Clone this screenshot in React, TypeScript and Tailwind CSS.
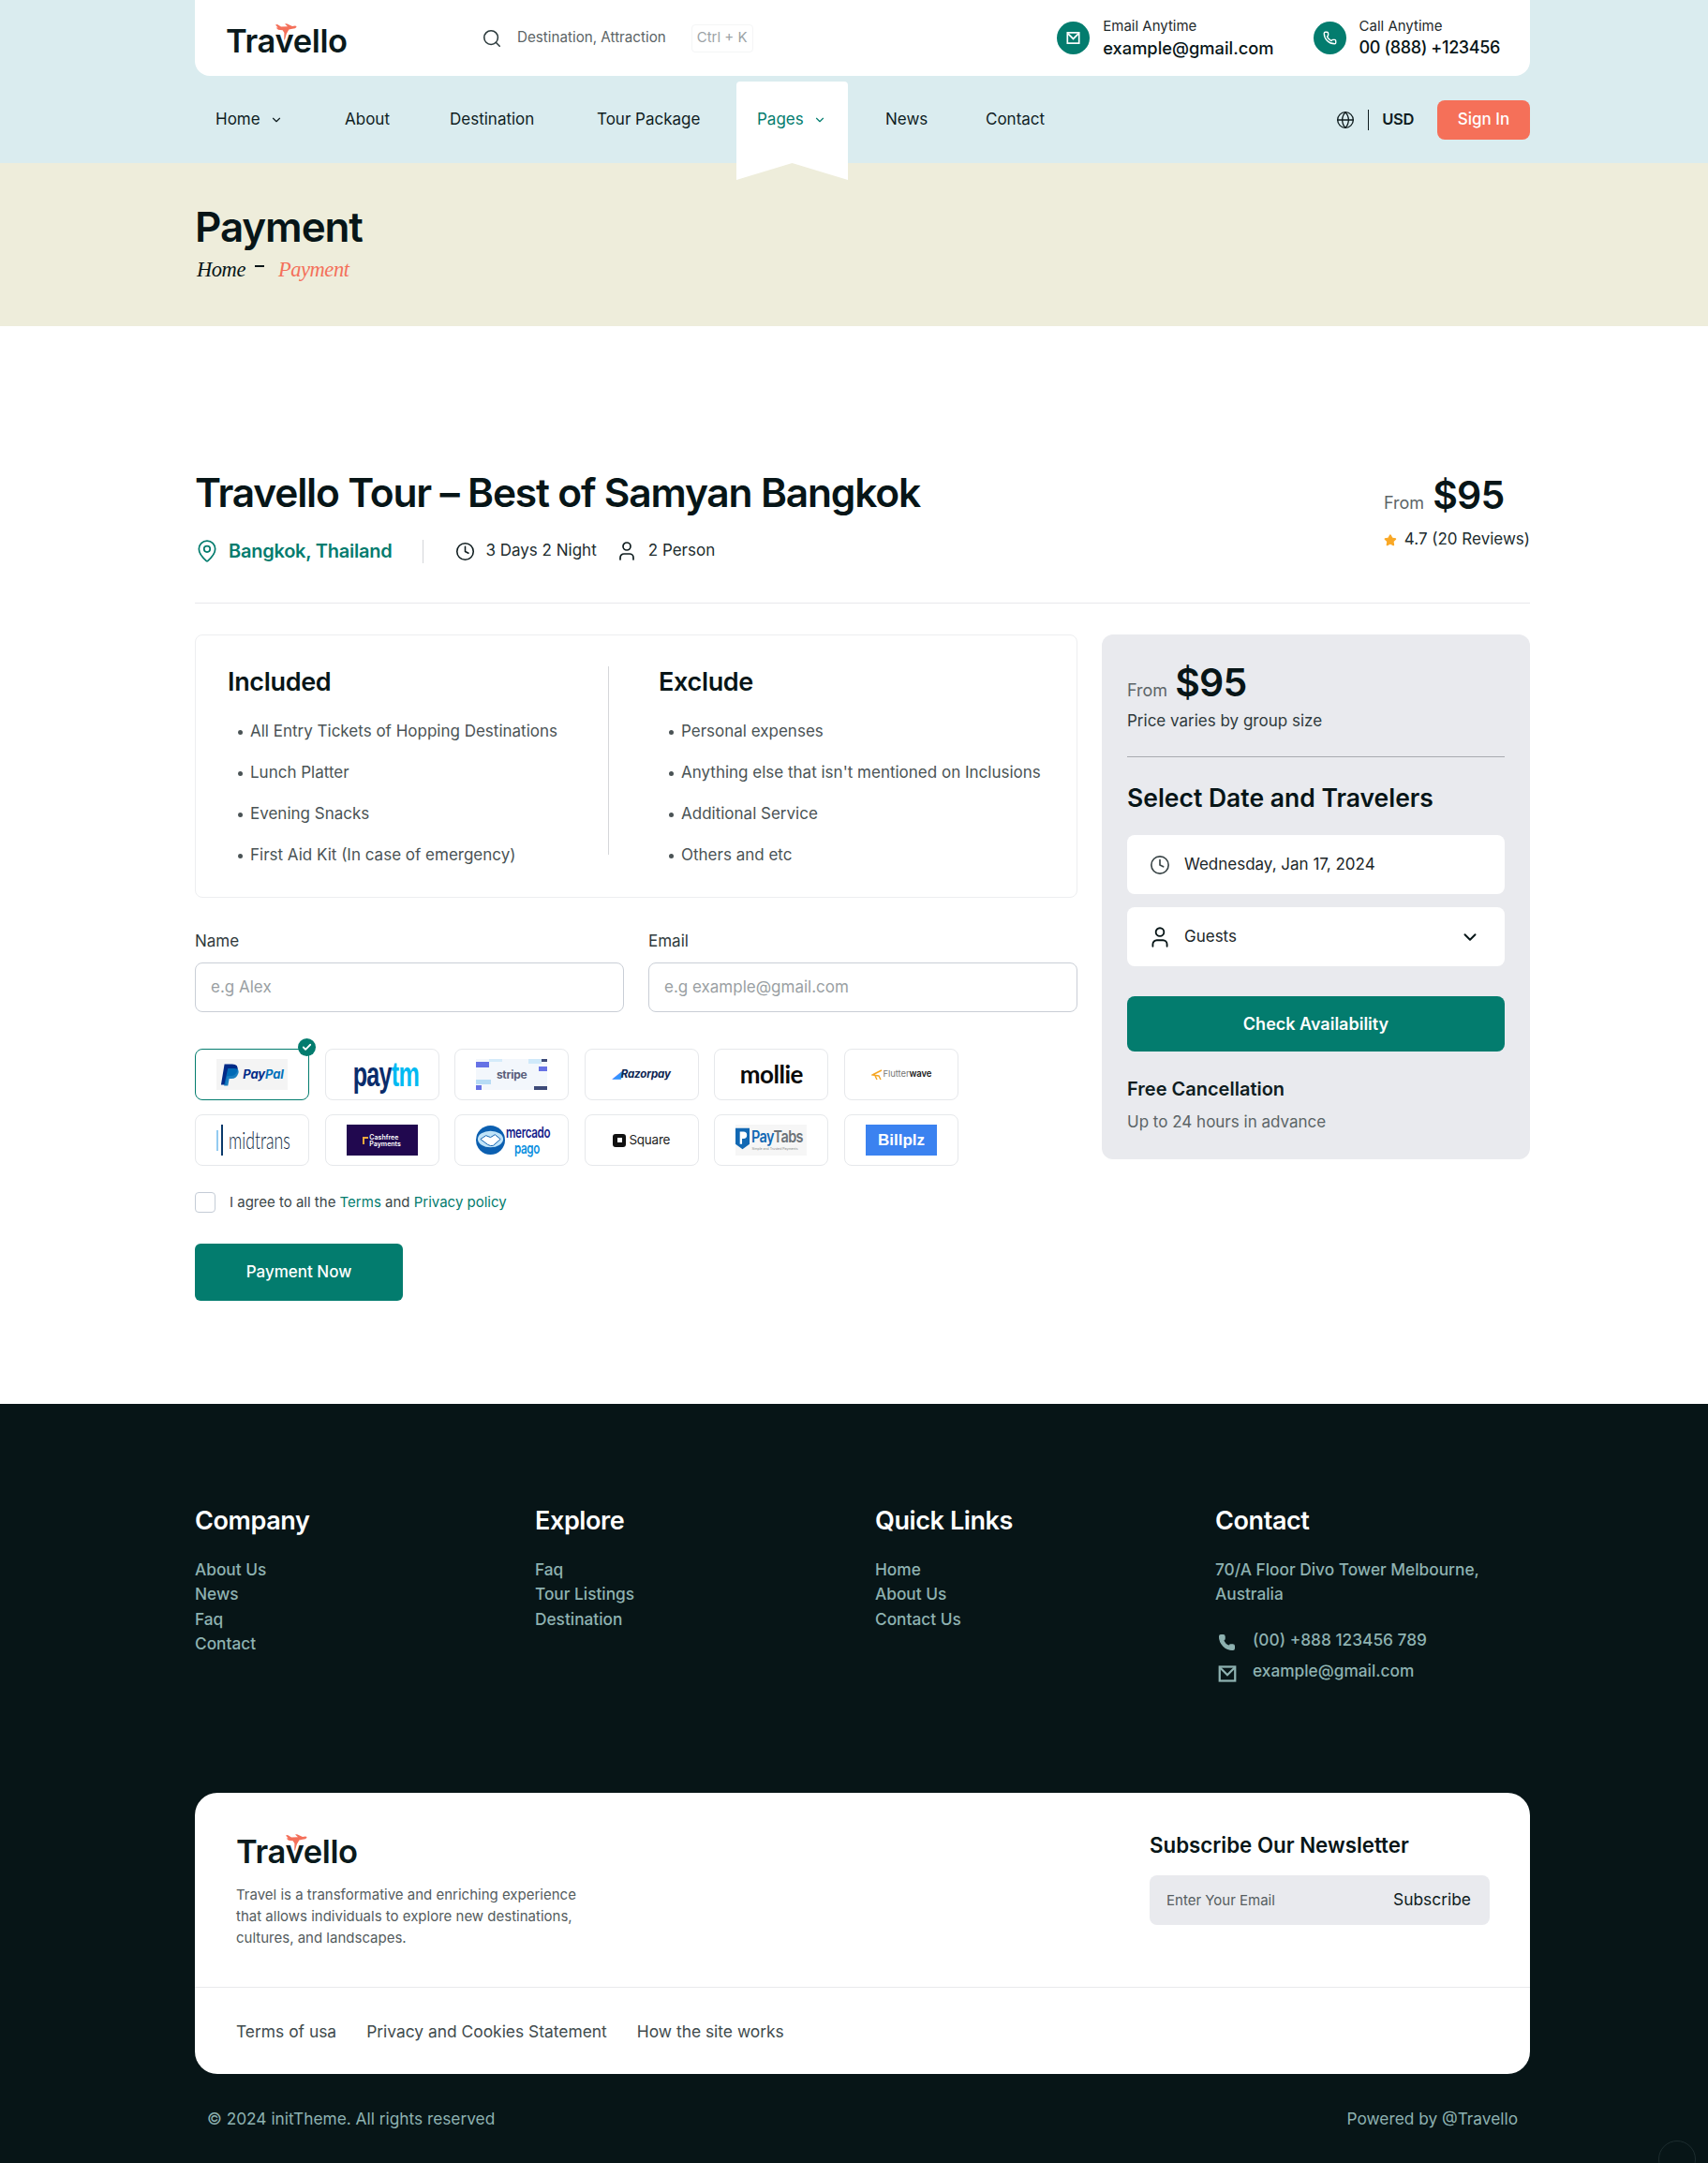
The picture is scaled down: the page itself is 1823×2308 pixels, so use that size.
import React from "react";
import { Search, Phone, Globe, Clock, User, ChevronDown, MapPin, Check, Star } from "lucide-react";

const Plane = ({ className }: { className: string }) => (
  <svg viewBox="0 0 24 18" className={className} fill="#f4705a">
    <path d="M1 1.5 L3 1 L7 3.6 L14 3.2 L11 0.4 L13 0.2 L19 3 L22 2.6 Q24 3 23.4 4 Q22.6 5.4 19 5.8 L15.4 6.4 L12.8 11 L11 17.6 L10.2 17.6 L10.4 10 L8.6 7.2 L4 6.8 L1.6 4.6 L3.6 4.6 Z" />
  </svg>
);

const Logo = () => (
  <div className="relative inline-block font-semibold tracking-[-0.01em] leading-none text-[#0a1a1c] text-[34.5px]">
    Travello
    <Plane className="absolute left-[52px] top-[-2px] w-[24px] h-[18px]" />
  </div>
);

const EnvelopeIcon = ({ className }: { className: string }) => (
  <svg viewBox="0 0 16 16" className={className} fill="none" stroke="currentColor" strokeWidth="1.8">
    <rect x="1.4" y="2" width="13.2" height="12" />
    <path d="M2 3 L8 9 L14 3" />
  </svg>
);

const ContactChip = ({ icon, label, value, className, valueClass }: { icon: React.ReactNode; label: string; value: string; className: string; valueClass: string }) => (
  <div className={`flex items-center gap-[14px] ${className}`}>
    <div className="w-[35px] h-[35px] rounded-full bg-[#037c6e] text-white flex items-center justify-center">{icon}</div>
    <div>
      <div className="text-[15px] leading-[20px] text-[#1f2a2c]">{label}</div>
      <div className={`leading-[26px] font-medium text-[#071517] ${valueClass}`}>{value}</div>
    </div>
  </div>
);

const NavItem = ({ label, w, pl = "pl-[22px]", chevron }: { label: string; w: string; pl?: string; chevron?: boolean }) => (
  <div className={`flex items-center gap-[10px] text-[17px] text-[#0f1d1f] ${w} ${pl}`}>
    {label}
    {chevron && <ChevronDown className="w-[14px] h-[14px]" strokeWidth={2} />}
  </div>
);

const Bullet = ({ children }: { children: string }) => (
  <li className="flex items-center h-[44px] pl-[11px] text-[17px] text-[#4a5355] whitespace-nowrap">
    <span className="w-[5px] h-[5px] rounded-full bg-[#4a5355] mr-[7px]" />
    <span className="ml-[1px]">{children}</span>
  </li>
);

const Tile = ({ children, selected }: { children: React.ReactNode; selected?: boolean }) => (
  <div className={`relative w-[122px] h-[55px] rounded-lg border flex items-center justify-center bg-white ${selected ? "border-[#037c6e]" : "border-[#e6e8eb]"}`}>
    <div className="w-[76px] h-[33px] flex items-center justify-center">{children}</div>
    {selected && (
      <div className="absolute right-[-8px] top-[-12px] w-[19px] h-[19px] rounded-full bg-[#037c6e] flex items-center justify-center">
        <Check className="w-[11px] h-[11px] text-white" strokeWidth={4} />
      </div>
    )}
  </div>
);

const FooterCol = ({ title, links, w }: { title: string; links: string[]; w: string }) => (
  <div className={w}>
    <h4 className="text-[27px] leading-[36px] font-semibold text-white tracking-[-0.015em]">{title}</h4>
    <ul className="mt-[21px] text-[17.3px] leading-[26.3px] font-medium text-[#8eb2b1]">
      {links.map((l) => (
        <li key={l}>{l}</li>
      ))}
    </ul>
  </div>
);

export default function App() {
  return (
    <div className="relative w-full h-[2308px] overflow-hidden bg-white font-['Inter',sans-serif] text-[#071517]">
      {/* Header */}
      <header className="h-[174px] bg-[#daecef]">
        <div className="ml-[208px] w-[1425px]">
          <div className="h-[81px] bg-white rounded-b-2xl flex items-center pl-[33px]">
            <div className="w-[273px] pt-[7px]"><Logo /></div>
            <Search className="w-[22px] h-[22px] text-[#2b3a3c]" strokeWidth={1.7} />
            <span className="ml-[16px] text-[15.2px] text-[#5c6466]">Destination, Attraction</span>
            <span className="ml-[27px] px-[5px] h-[30px] flex items-center border border-[#f4f5f6] rounded text-[15px] text-[#9ca3a6]">Ctrl + K</span>
            <ContactChip
              className="ml-auto"
              valueClass="text-[18.3px]"
              icon={<EnvelopeIcon className="w-[15px] h-[15px]" />}
              label="Email Anytime"
              value="example@gmail.com"
            />
            <ContactChip
              className="ml-[42px] mr-[32px]"
              valueClass="text-[18px] tracking-[-0.02em] whitespace-nowrap"
              icon={<Phone className="w-[15px] h-[15px]" strokeWidth={2.2} />}
              label="Call Anytime"
              value="00 (888) +123456"
            />
          </div>
          <nav className="h-[93px] flex items-center">
            <NavItem label="Home" w="w-[138px]" chevron />
            <NavItem label="About" w="w-[112px]" />
            <NavItem label="Destination" w="w-[157px]" />
            <NavItem label="Tour Package" w="w-[171px]" />
            <div className="relative w-[119px] h-full flex items-center pl-[22px] gap-[10px] text-[17px] text-[#037c6e]">
              <svg viewBox="0 0 119 105" className="absolute left-0 top-[6px] w-[119px] h-[105px]" fill="#ffffff">
                <path d="M4 0 H115 Q119 0 119 4 V105 L59.5 87 L0 105 V4 Q0 0 4 0 Z" />
              </svg>
              <span className="relative">Pages</span>
              <ChevronDown className="relative w-[14px] h-[14px]" strokeWidth={2} />
            </div>
            <NavItem label="News" w="w-[147px]" pl="pl-[40px]" />
            <NavItem label="Contact" w="w-[120px]" pl="pl-[0px]" />
            <div className="ml-auto flex items-center">
              <Globe className="w-[20px] h-[20px] text-[#0f1d1f]" strokeWidth={1.6} />
              <span className="ml-[14px] w-px h-[22px] bg-[#0f1d1f]" />
              <span className="ml-[14px] text-[16.5px] font-semibold text-[#0f1d1f] tracking-[-0.02em]">USD</span>
              <button className="ml-[25px] w-[99px] h-[42px] rounded-lg bg-[#f57059] text-white text-[17px] font-medium">Sign In</button>
            </div>
          </nav>
        </div>
      </header>

      {/* Page banner */}
      <section className="h-[174px] bg-[#eeeddb] pl-[208px] pt-[41px]">
        <h1 className="text-[44px] leading-[54px] font-semibold tracking-[-0.025em] text-[#071517]">Payment</h1>
        <div className="flex items-center text-[22.5px] leading-[32px] italic tracking-[-0.02em] font-['Liberation_Serif',serif] pl-[2px] mt-[3px]">
          <span className="text-[#071517]">Home</span>
          <span className="ml-[10px] mb-[8px] w-[10px] h-[2px] bg-[#071517]" />
          <span className="ml-[15px] text-[#f4705a]">Payment</span>
        </div>
      </section>

      {/* Main */}
      <main className="h-[1150px] ml-[208px] w-[1425px] pt-[148px]">
        <div className="flex justify-between h-[148px] border-b border-[#e8e9ec]">
          <div>
            <h2 className="text-[42.5px] leading-[60px] font-semibold tracking-[-0.028em] text-[#071517]">Travello Tour – Best of Samyan Bangkok</h2>
            <div className="flex items-center mt-[17px] h-[30px]">
              <MapPin className="w-[26px] h-[26px] text-[#037c6e]" strokeWidth={1.6} />
              <span className="ml-[10px] text-[20px] font-semibold text-[#037c6e] tracking-[-0.012em]">Bangkok, Thailand</span>
              <span className="ml-[33px] w-px h-[25px] bg-[#d4d6d9]" />
              <Clock className="ml-[34px] w-[21px] h-[21px] text-[#0f1d1f]" strokeWidth={1.8} />
              <span className="ml-[11px] text-[17px] text-[#202c2e]">3 Days 2 Night</span>
              <User className="ml-[20px] w-[24px] h-[24px] text-[#0f1d1f]" strokeWidth={1.7} />
              <span className="ml-[11px] text-[17px] text-[#202c2e]">2 Person</span>
            </div>
          </div>
          <div className="w-[156px] pt-[5px]">
            <div className="flex items-baseline h-[54px]">
              <span className="text-[18px] text-[#5d6568]">From</span>
              <span className="ml-[9px] text-[41px] leading-[54px] font-semibold tracking-[-0.02em] text-[#071517]">$95</span>
            </div>
            <div className="flex items-center h-[28px] mt-[7px] text-[17px] text-[#202c2e]">
              <Star className="w-[17px] h-[17px] text-[#f9a826] fill-[#f9a826]" />
              <span className="ml-[8px] whitespace-nowrap">4.7 (20 Reviews)</span>
            </div>
          </div>
        </div>

        <div className="flex justify-between mt-[33px]">
          <div className="w-[942px]">
            <div className="h-[281px] rounded-lg border border-[#edeef0] flex pt-[33px]">
              <div className="w-[441px] h-[201px] pl-[34px] border-r border-[#d5d7da]">
                <h3 className="text-[27px] leading-[34px] font-semibold tracking-[-0.012em]">Included</h3>
                <ul className="mt-[14px]">
                  <Bullet>All Entry Tickets of Hopping Destinations</Bullet>
                  <Bullet>Lunch Platter</Bullet>
                  <Bullet>Evening Snacks</Bullet>
                  <Bullet>First Aid Kit (In case of emergency)</Bullet>
                </ul>
              </div>
              <div className="pl-[53px]">
                <h3 className="text-[27px] leading-[34px] font-semibold tracking-[-0.012em]">Exclude</h3>
                <ul className="mt-[14px]">
                  <Bullet>Personal expenses</Bullet>
                  <Bullet>Anything else that isn't mentioned on Inclusions</Bullet>
                  <Bullet>Additional Service</Bullet>
                  <Bullet>Others and etc</Bullet>
                </ul>
              </div>
            </div>

            <div className="flex gap-[26px] mt-[33px]">
              {[["Name", "e.g Alex"], ["Email", "e.g example@gmail.com"]].map(([label, ph]) => (
                <div key={label} className="w-[458px]">
                  <div className="text-[17px] leading-[26px] text-[#2f3a3c]">{label}</div>
                  <div className="mt-[10px] h-[53px] rounded-lg border border-[#c9ced6] flex items-center pl-[16px] text-[17px] text-[#9a9fa3]">{ph}</div>
                </div>
              ))}
            </div>

            <div className="mt-[39px] grid grid-cols-[repeat(6,122px)] gap-x-[16.6px] gap-y-[15px]">
              <Tile selected>
                <div className="w-full h-full bg-[#f4f4f4] flex items-center justify-center gap-[2px]">
                  <svg viewBox="0 0 24 28" className="w-[22px] h-[31px] shrink-0">
                    <path d="M5 2 H14 Q22 2 20 10 Q18 16 11 16 H8 L6 26 H1 Z" fill="#012a87" />
                    <path d="M9 7 H16 Q23 7 21 13 Q19 19 13 19 H10.5 L9 27 H4.5 Z" fill="#0070ba" opacity="0.9" />
                  </svg>
                  <span className="text-[13px] font-bold italic tracking-[-0.01em] text-[#012a87]">Pay<span className="text-[#0070ba]">Pal</span></span>
                </div>
              </Tile>
              <Tile>
                <span className="w-[92px] shrink-0 text-center scale-x-[0.68] text-[37px] leading-none font-bold tracking-[-0.03em] text-[#0a2c6b] font-['Liberation_Sans',sans-serif] whitespace-nowrap">pay<span className="text-[#00baf2]">tm</span></span>
              </Tile>
              <Tile>
                <div className="relative w-full h-full bg-[#f3f7fc] flex items-center justify-center">
                  <span className="absolute left-0 top-[3px] w-[14px] h-[6px] bg-[#6672e5]" />
                  <span className="absolute left-[14px] top-0 w-[14px] h-[3px] bg-[#d5ebfa]" />
                  <span className="absolute right-0 top-0 w-[6px] h-[3px] bg-[#3d4a78]" />
                  <span className="absolute right-[6px] top-0 w-[14px] h-[5px] bg-[#cfe9fa]" />
                  <span className="absolute right-0 top-[8px] w-[9px] h-[5px] bg-[#6672e5]" />
                  <span className="absolute left-0 bottom-[6px] w-[16px] h-[5px] bg-[#b7dcf5]" />
                  <span className="absolute left-0 bottom-0 w-[6px] h-[5px] bg-[#6672e5]" />
                  <span className="absolute right-0 bottom-0 w-[14px] h-[4px] bg-[#3d4a78]" />
                  <span className="relative text-[12px] font-bold text-[#5a5f7a] tracking-[-0.02em]">stripe</span>
                </div>
              </Tile>
              <Tile>
                <span className="text-[11.5px] font-bold italic text-[#0c2451] tracking-[-0.01em] whitespace-nowrap"><span className="text-[#3395ff]">◢</span>Razorpay</span>
              </Tile>
              <Tile>
                <span className="text-[26px] font-bold tracking-[-0.02em] text-[#0a0a0a] font-['Lato',sans-serif]">mollie</span>
              </Tile>
              <Tile>
                <span className="flex items-center text-[9.5px] font-semibold text-[#1a1a1a] whitespace-nowrap tracking-[-0.01em]">
                  <svg viewBox="0 0 12 12" className="w-[12px] h-[12px] mr-[1px] shrink-0" fill="none" stroke="#f5a623" strokeWidth="1.4"><path d="M11 1 L3 5 L1 6 L8 7 L10 11 M3 5 L6 11" /></svg>
                  <span className="font-normal text-[#777]">Flutter</span>wave
                </span>
              </Tile>
              <Tile>
                <span className="flex items-center gap-[3px] h-full w-full">
                  <span className="w-[2px] h-[22px] bg-[#93cbf1] shrink-0" />
                  <span className="w-[2px] h-[33px] bg-[#0a3a6b] shrink-0" />
                  <span className="w-[88px] shrink-0 ml-[3px] mr-[-30px] origin-left scale-x-[0.68] text-[26px] font-light text-[#0a2540] font-['Lato',sans-serif] whitespace-nowrap">midtrans</span>
                </span>
              </Tile>
              <Tile>
                <div className="w-full h-full bg-[#21084f] flex items-center justify-center gap-[1px]">
                  <span className="w-[6px] h-[8px] border-l-2 border-t-2 border-[#f4a93c]" />
                  <span className="text-[7px] leading-[7px] font-semibold text-white">Cashfree<br />Payments</span>
                </div>
              </Tile>
              <Tile>
                <div className="flex items-center w-full h-full">
                  <svg viewBox="0 0 32 32" className="w-[31px] h-[31px] shrink-0">
                    <circle cx="16" cy="16" r="16" fill="#0b5fb0" />
                    <ellipse cx="16" cy="15" rx="14" ry="9" fill="#bfe3f8" />
                    <path d="M5 15 L11 11 L16 13 L21 10 L27 15 L19 22 Q16 23 13 21 Z" fill="#ffffff" stroke="#0b5fb0" strokeWidth="1" />
                  </svg>
                  <span className="w-[60px] shrink-0 ml-[1px] mr-[-16px] origin-left scale-x-[0.75] text-center text-[15.5px] leading-[17px] font-semibold tracking-[-0.03em]">
                    <span className="text-[#16228b]">mercado</span><br /><span className="text-[#0b8fe0]">pago</span>
                  </span>
                </div>
              </Tile>
              <Tile>
                <span className="flex items-center gap-[3px]">
                  <span className="w-[14px] h-[14px] rounded-[3px] bg-[#111] flex items-center justify-center">
                    <span className="w-[5px] h-[5px] bg-white" />
                  </span>
                  <span className="text-[13.5px] text-[#222] tracking-[-0.02em]">Square</span>
                </span>
              </Tile>
              <Tile>
                <div className="w-full h-full bg-[#f6f6f6] flex items-start gap-[2px] pt-[3px]">
                  <svg viewBox="0 0 16 24" className="w-[15px] h-[24px] shrink-0">
                    <path d="M0 0 H16 V18 L8 24 L0 18 Z" fill="#1168b3" />
                    <path d="M5 4 H9 Q13 4 13 8 Q13 12 9 12 H7.5 V18 H5 Z" fill="#fff" />
                  </svg>
                  <span className="flex flex-col">
                    <span className="w-[62px] origin-left scale-x-[0.85] mr-[-9px] text-[17px] leading-[20px] font-semibold tracking-[-0.04em] whitespace-nowrap text-[#1168b3]">Pay<span className="text-[#6b7278]">Tabs</span></span>
                    <span className="w-[54px] text-[3.5px] leading-[6px] text-[#888] whitespace-nowrap">Simple and Trusted Payments</span>
                  </span>
                </div>
              </Tile>
              <Tile>
                <div className="w-full h-full bg-[#3b82f0] flex items-center justify-center text-white text-[17px] font-bold font-['Liberation_Sans',sans-serif]">Billplz</div>
              </Tile>
            </div>

            <div className="flex items-center mt-[28px] h-[22px]">
              <span className="w-[22px] h-[22px] rounded border border-[#c4ccd6]" />
              <span className="ml-[15px] text-[15px] text-[#3b4648]">
                I agree to all the <span className="text-[#037c6e]">Terms</span> and <span className="text-[#037c6e]">Privacy policy</span>
              </span>
            </div>

            <button className="mt-[33px] w-[222px] h-[61px] rounded-md bg-[#037c6e] text-white text-[17px] font-medium">Payment Now</button>
          </div>

          <aside className="w-[457px] h-[560px] rounded-xl bg-[#e9eaee] px-[27px] pt-[24px]">
            <div className="flex items-baseline h-[60px]">
              <span className="text-[18px] text-[#5d6568]">From</span>
              <span className="ml-[8px] text-[41px] leading-[54px] font-semibold tracking-[-0.02em] text-[#071517]">$95</span>
            </div>
            <div className="text-[17px] leading-[24px] text-[#2f3a3c] mt-[-4px]">Price varies by group size</div>
            <div className="mt-[26px] h-px bg-[#a9abb0]" />
            <h3 className="mt-[26px] text-[26.5px] leading-[34px] font-semibold text-[#071517]">Select Date and Travelers</h3>
            <div className="mt-[23px] h-[63px] rounded-lg bg-white flex items-center pl-[24px] text-[17px] text-[#1b2628]">
              <Clock className="w-[22px] h-[22px] text-[#3a4547]" strokeWidth={1.8} />
              <span className="ml-[15px]">Wednesday, Jan 17, 2024</span>
            </div>
            <div className="mt-[14px] h-[63px] rounded-lg bg-white flex items-center pl-[22px] pr-[26px] text-[17px] text-[#1b2628]">
              <User className="w-[26px] h-[26px] text-[#071517]" strokeWidth={1.7} />
              <span className="ml-[13px]">Guests</span>
              <ChevronDown className="ml-auto w-[22px] h-[22px] text-[#071517]" strokeWidth={2.2} />
            </div>
            <button className="mt-[32px] w-full h-[59px] rounded-lg bg-[#037c6e] text-white text-[18px] font-semibold">Check Availability</button>
            <div className="mt-[26px] text-[20px] leading-[28px] font-semibold text-[#0f1d1f]">Free Cancellation</div>
            <div className="mt-[8px] text-[17px] leading-[26px] text-[#5b6466]">Up to 24 hours in advance</div>
          </aside>
        </div>
      </main>

      {/* Footer */}
      <footer className="h-[810px] bg-[#071517] pt-[107px]">
        <div className="ml-[208px] w-[1425px]">
          <div className="flex h-[308px]">
            <FooterCol w="w-[363px]" title="Company" links={["About Us", "News", "Faq", "Contact"]} />
            <FooterCol w="w-[363px]" title="Explore" links={["Faq", "Tour Listings", "Destination"]} />
            <FooterCol w="w-[363px]" title="Quick Links" links={["Home", "About Us", "Contact Us"]} />
            <div className="flex-1">
              <h4 className="text-[27px] leading-[36px] font-semibold text-white tracking-[-0.015em]">Contact</h4>
              <p className="mt-[21px] text-[17.3px] leading-[26.3px] font-medium text-[#8eb2b1]">70/A Floor Divo Tower Melbourne,<br />Australia</p>
              <div className="mt-[20px] flex items-center h-[30px] text-[17.3px] font-medium text-[#8eb2b1]">
                <Phone className="w-[19px] h-[19px] ml-[3px] mt-[6px] fill-[#8eb2b1]" strokeWidth={1.5} />
                <span className="ml-[18px] whitespace-nowrap">(00) +888 123456 789</span>
              </div>
              <div className="mt-[3px] flex items-center h-[30px] text-[17.3px] font-medium text-[#8eb2b1]">
                <EnvelopeIcon className="w-[20px] h-[20px] ml-[3px] mt-[6px]" />
                <span className="ml-[17px]">example@gmail.com</span>
              </div>
            </div>
          </div>

          <div className="h-[300px] bg-white rounded-3xl">
            <div className="h-[208px] border-b border-[#e8e9ec] flex justify-between pl-[44px] pr-[43px]">
              <div className="pt-[46px]">
                <Logo />
                <p className="mt-[16px] text-[15px] leading-[23px] text-[#545c5e]">
                  Travel is a transformative and enriching experience<br />
                  that allows individuals to explore new destinations,<br />
                  cultures, and landscapes.
                </p>
              </div>
              <div className="w-[363px] pt-[41px]">
                <div className="text-[22.3px] leading-[30px] font-semibold text-[#071517]">Subscribe Our Newsletter</div>
                <div className="mt-[17px] h-[53px] rounded-lg bg-[#e9eaee] flex items-center justify-between pl-[18px] pr-[20px]">
                  <span className="text-[15px] text-[#555d60] pt-[1px]">Enter Your Email</span>
                  <span className="text-[17.4px] text-[#0f1d1f]">Subscribe</span>
                </div>
              </div>
            </div>
            <div className="h-[92px] flex items-center pl-[44px] gap-[32px] text-[17.4px] text-[#414b4d] pt-[2px]">
              <span>Terms of usa</span>
              <span>Privacy and Cookies Statement</span>
              <span>How the site works</span>
            </div>
          </div>

          <div className="flex justify-between pl-[13px] pr-[13px] mt-[35px] text-[17.3px] leading-[26px] text-[#8eb2b1]">
            <span>© 2024 initTheme. All rights reserved</span>
            <span>Powered by @Travello</span>
          </div>
        </div>
      </footer>

      <div className="absolute left-[1770px] top-[2284px] w-[40px] h-[40px] rounded-full border border-[#1d2d2f]" />
    </div>
  );
}
